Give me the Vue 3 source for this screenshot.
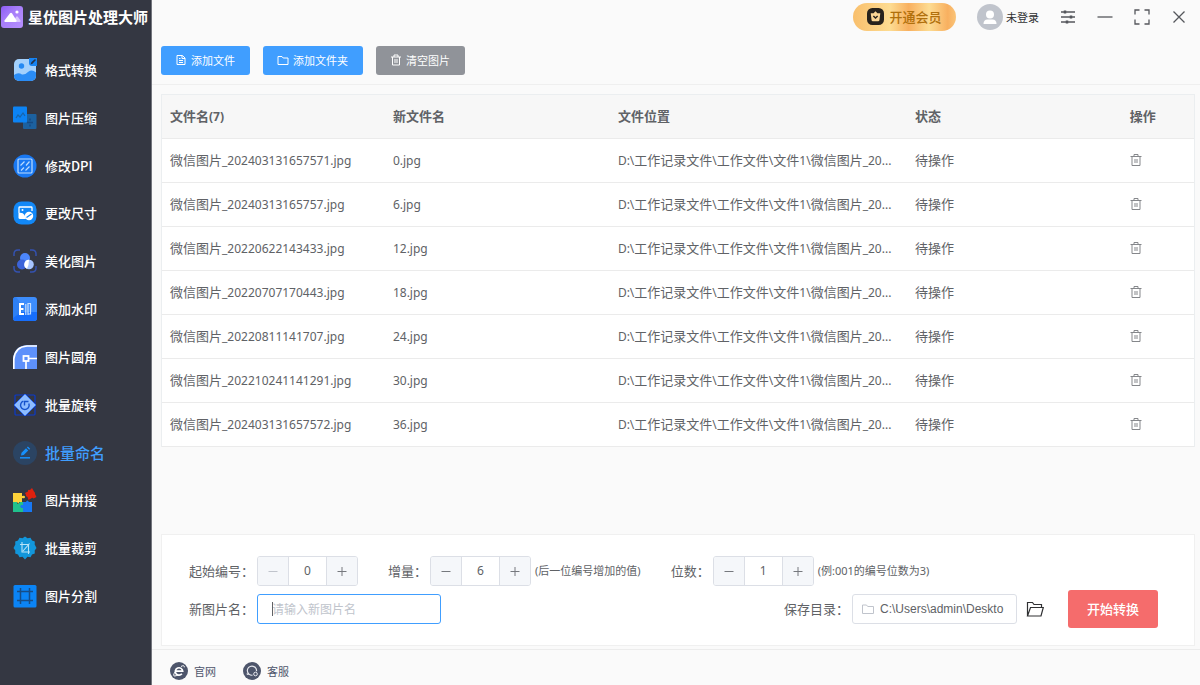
<script setup>
import { ref } from 'vue'

const navItems = [
  { id: 'convert', label: '格式转换' },
  { id: 'compress', label: '图片压缩' },
  { id: 'dpi', label: '修改DPI' },
  { id: 'resize', label: '更改尺寸' },
  { id: 'beautify', label: '美化图片' },
  { id: 'watermark', label: '添加水印' },
  { id: 'corner', label: '图片圆角' },
  { id: 'rotate', label: '批量旋转' },
  { id: 'rename', label: '批量命名' },
  { id: 'join', label: '图片拼接' },
  { id: 'crop', label: '批量裁剪' },
  { id: 'split', label: '图片分割' },
]
const active = ref('rename')

const folder = 'D:\\工作记录文件\\工作文件\\文件1\\'
const files = ref(
  [
    ['微信图片_202403131657571.jpg', '0.jpg'],
    ['微信图片_20240313165757.jpg', '6.jpg'],
    ['微信图片_20220622143433.jpg', '12.jpg'],
    ['微信图片_20220707170443.jpg', '18.jpg'],
    ['微信图片_20220811141707.jpg', '24.jpg'],
    ['微信图片_202210241141291.jpg', '30.jpg'],
    ['微信图片_202403131657572.jpg', '36.jpg'],
  ].map(([name, renamed]) => ({ name, renamed, path: folder + '微信图片_20...', status: '待操作' }))
)

const numbers = ref([
  { id: 'start', label: '起始编号：', value: 0, min: 0, hint: '' },
  { id: 'step', label: '增量：', value: 6, min: 1, hint: '(后一位编号增加的值)' },
  { id: 'digits', label: '位数：', value: 1, min: 0, hint: '(例:001的编号位数为3)' },
])
const newName = ref('')
const savePath = ref('C:\\Users\\admin\\Deskto')

// Splits mixed text so Latin runs can be set slightly smaller than Chinese ones.
function runs(text) {
  return text.match(/[\x20-\x7e]+|[^\x20-\x7e]+/g).map((t) => ({ t, latin: t.charCodeAt(0) < 127 }))
}
</script>

<template>
  <div class="app">
    <aside class="sidebar">
      <div class="brand">
        <svg class="brand-icon" viewBox="0 0 24 24" aria-hidden="true">
          <defs>
            <linearGradient id="brandFill" x1="0" y1="0" x2="1" y2="1">
              <stop offset="0" stop-color="#8d5cf6" /><stop offset=".4" stop-color="#a67df9" /><stop offset="1" stop-color="#b690ff" />
            </linearGradient>
          </defs>
          <rect x="1" y="1" width="22" height="22" rx="3" fill="url(#brandFill)" />
          <path d="M13 17l3-5q1-1.500 2 0l2.500 3.500q.6 1.500-1 1.500z" fill="#d9c6ff" />
          <path d="M5 17q-1-.2-.5-1.400L10 8.300q1-1.200 2 0l4.500 7.300q.5 1.200-1 1.400z" fill="#fff" />
          <circle cx="17" cy="7" r="1.600" fill="#fff" />
        </svg>
        <h1>星优图片处理大师</h1>
      </div>
      <nav class="nav">
        <a v-for="n in navItems" :key="n.id" href="#" :class="{ active: n.id === active }" @click.prevent="active = n.id">
          <svg class="nav-icon" viewBox="0 0 24 24" aria-hidden="true">
            <g v-if="n.id === 'convert'">
              <rect x="1" y="1" width="22" height="22" rx="5" fill="#a3d0fc" />
              <path d="M1 17q4-3 8-.5 3 .5 6-2.500 4-3 8 .5V18a5 5 0 0 1-5 5H6a5 5 0 0 1-5-5z" fill="#2a8cf5" />
              <circle cx="8.500" cy="8" r="2.700" fill="#2489f3" />
              <path d="M16 0h8v8h-5q-3 0-3-3z" fill="#1683f2" />
              <path d="M17.500 6.500l1-2.500L22 1l1 1-3.500 3.800z" fill="#253349" />
            </g>
            <g v-else-if="n.id === 'compress'">
              <rect x="10" y="8" width="13.500" height="15" rx="1" fill="#1c619f" />
              <path d="M14 16.500h6M17 12.500v2M17 18.500v2" stroke="#164a82" stroke-width="1.500" />
              <rect x="0" y="0.500" width="14" height="16" rx="1" fill="#0c83f4" />
              <path d="M3 12l2-3 2 2 3-4 2 3" stroke="#1864a9" stroke-width="1.200" fill="none" />
            </g>
            <g v-else-if="n.id === 'dpi'" fill="none" stroke="#bbdcff" stroke-width="1.200">
              <circle cx="12" cy="12" r="11.500" fill="#1978f2" stroke="none" />
              <rect x="5" y="5" width="14" height="14" rx="1" />
              <path d="M7.500 11.500l4-4M8 16.500l3-3M13 11.500l3.500-4M12.500 16.500l4-4" />
            </g>
            <g v-else-if="n.id === 'resize'">
              <rect x=".5" y=".5" width="23" height="23" rx="8" fill="#1288f7" />
              <path d="M6 12V6.800q0-.8.800-.8h11.400q.8 0 .8.800V10" fill="none" stroke="#fff" stroke-width="1.300" />
              <circle cx="9.500" cy="9" r="1" fill="#fff" />
              <path d="M5.500 12q4-1 6 2l1.500 4H7q-1.500 0-1.500-1.500z" fill="#fff" />
              <circle cx="16" cy="15" r="4.200" fill="#fff" />
              <path d="M13.500 16.500l5-3.500" stroke="#1288f7" stroke-width="1.300" />
            </g>
            <g v-else-if="n.id === 'beautify'">
              <path d="M1 7V5q0-4 4-4h2M17 1h2q4 0 4 4v2M23 17v2q0 4-4 4h-2M7 23H5q-4 0-4-4v-2" fill="none" stroke="#3452b0" stroke-width="1.500" />
              <circle cx="12" cy="9" r="5" fill="#4c86fa" />
              <circle cx="9" cy="15.500" r="5" fill="#3b63d9" />
              <circle cx="16" cy="15.500" r="4.800" fill="#a8c5ff" />
              <path d="M16 10.700a4.800 4.800 0 0 0-2 9.100q2-4 2-9.100z" fill="#fff" />
            </g>
            <g v-else-if="n.id === 'watermark'">
              <rect width="24" height="24" rx="3" fill="#3d8dfc" />
              <path d="M0 3q0-3 3-3l9 12L0 21z" fill="#2e80f4" />
              <path d="M0 21l8-6h16v6q0 3-3 3H3q-3 0-3-3z" fill="#176efb" />
              <path d="M11 7H7v10h4M7 12h3.500" fill="none" stroke="#fff" stroke-width="2" />
              <path d="M12.800 18V7M15 18V6.500h2.500V17H15" fill="none" stroke="#c4deff" stroke-width="1.200" />
            </g>
            <g v-else-if="n.id === 'corner'">
              <path d="M0 24V14Q1 1 14 0h10v24z" fill="#5e91fb" />
              <path d="M.8 24V14Q2 2 14 1h10" fill="none" stroke="#fff" stroke-width="1.700" />
              <rect x="10.500" y="11" width="5" height="5" fill="none" stroke="#fff" stroke-width="1.800" />
              <path d="M16 13.500h8M13 16v8" stroke="#fff" stroke-width="1.700" />
            </g>
            <g v-else-if="n.id === 'rotate'">
              <rect x="2" y="2" width="20" height="20" rx="1" fill="none" stroke="#0a3acb" stroke-width="1.200" />
              <path d="M12 1L23 12 12 23 1 12z" fill="#8dbcff" stroke="#2f6cf2" stroke-width="1" stroke-linejoin="round" />
              <path d="M15.800 10.500a4.300 4.300 0 1 1-5.500-2.300M11.500 12.500V8.500h4" fill="none" stroke="#1552cc" stroke-width="1.400" />
            </g>
            <g v-else-if="n.id === 'rename'">
              <circle cx="12" cy="12" r="12" fill="#2b4463" />
              <path d="M8 14.500l.5-2.700 4.500-4.500 2.200 2.200-4.500 4.500zM13.900 6.500l1-1 2.300 2.200-1 1z" fill="#1690fc" />
              <path d="M7 16.800h10" stroke="#1690fc" stroke-width="1.500" />
            </g>
            <g v-else-if="n.id === 'join'">
              <path d="M0 5h9v3q3-1 3 1t-3 1v4H6q0 3-2 0H0z" fill="#fdd23a" />
              <path d="M0 14h4q0 4 3 0h3v3q-3 0-2 2l2 1v4H0z" fill="#20c18d" />
              <path d="M10 14h3q1-3 3 0h3v10h-9v-4q-4 0-2-3h2z" fill="#1878f4" />
              <path d="M12 5l3-1.500Q14.500 1 17 2l2-2 2 3.500q1.500 1 1 2.500l1.500 3-3 1.500q-1-1.500-2.500 0l-2.500 1.500-1-3q-2.500-1-1.500-2z" fill="#df210e" />
            </g>
            <g v-else-if="n.id === 'crop'">
              <path d="M12 .5l2.500 1.700 3-.4 1.500 2.700 2.800 1-.1 3L23.500 12l-1.800 2.500.1 3-2.800 1-1.500 2.700-3-.4L12 23.500l-2.500-2.700-3 .4L5 18.500l-2.800-1 .1-3L.5 12l1.800-3.500-.1-3 2.800-1 1.500-2.700 3 .4z" fill="#1296db" />
              <path d="M9 6v10h8M7 8.500h8.500V18M10 15l6.500-7.500" fill="none" stroke="#b7e3f7" stroke-width="1.100" />
            </g>
            <g v-else>
              <rect x=".5" y="1" width="23" height="22.500" rx="1.500" fill="#0b84f5" />
              <path d="M7.500 4v16M16.500 4v16M4 7.500h16M4 16.500h16" stroke="#174d86" stroke-width="1.500" />
            </g>
          </svg>
          <span>{{ n.label }}</span>
        </a>
      </nav>
    </aside>

    <main class="main">
      <header class="head">
        <div class="titlebar">
          <button class="vip" type="button">
            <svg viewBox="0 0 16 16" aria-hidden="true">
              <rect width="16" height="16" rx="5" fill="#28231c" />
              <path d="M8 3l1.800 2L12.500 5l-.8 6.500q-.2 1-1.200 1h-5q-1 0-1.200-1L3.500 5l2.700 0z" fill="#fcd795" />
              <path d="M6 7.500l2 2 2-2" fill="none" stroke="#28231c" stroke-width="1.300" />
            </svg>
            开通会员
          </button>
          <button class="user" type="button">
            <svg viewBox="0 0 26 26" aria-hidden="true">
              <circle cx="13" cy="13" r="13" fill="#c0c4cc" />
              <circle cx="13" cy="10.500" r="4" fill="#fff" />
              <path d="M6.500 20q0-4.500 4-4.500h5q4 0 4 4.500z" fill="#fff" />
            </svg>
            未登录
          </button>
          <button class="win" type="button" aria-label="设置">
            <svg viewBox="0 0 16 16"><path d="M1 3h14M1 8h14M1 13h14" /><path d="M5 1.500v3M11 6.500v3M7 11.500v3" stroke-width="2.500" /></svg>
          </button>
          <button class="win" type="button" aria-label="最小化">
            <svg viewBox="0 0 16 16"><path d="M0.500 8h15" /></svg>
          </button>
          <button class="win" type="button" aria-label="最大化">
            <svg viewBox="0 0 16 16"><path d="M1 5.500V1h4.500M10.500 1H15v4.500M15 10.500V15h-4.500M5.500 15H1v-4.500" /></svg>
          </button>
          <button class="win" type="button" aria-label="关闭">
            <svg viewBox="0 0 16 16"><path d="M2.500 2.500l11 11M13.500 2.500l-11 11" /></svg>
          </button>
        </div>
        <div class="toolbar">
          <button class="btn" type="button">
            <svg viewBox="0 0 12 12"><path d="M2 1.500h5.500l2.500 2.500v6.500H2zM7 1.500v3h3M4 6.500h4M4 8.500h4M4 4.500h1.500" /></svg>添加文件
          </button>
          <button class="btn" type="button">
            <svg viewBox="0 0 12 12"><path d="M1 2.500h4l1.200 1.500h4.800V10.500H1z" /></svg>添加文件夹
          </button>
          <button class="btn grey" type="button">
            <svg viewBox="0 0 12 12"><path d="M1 3h10M4 3V1h4v2M2.500 3v8h7V3M5 5v4M7 5v4" /></svg>清空图片
          </button>
        </div>
      </header>

      <section class="content">
        <table class="files">
          <colgroup><col class="c1" /><col class="c2" /><col class="c3" /><col class="c4" /><col /></colgroup>
          <thead>
            <tr>
              <th>文件名<span class="latin">({{ files.length }})</span></th>
              <th>新文件名</th><th>文件位置</th><th>状态</th><th>操作</th>
            </tr>
          </thead>
          <tbody>
            <tr v-for="(f, i) in files" :key="i">
              <td><span v-for="(r, k) in runs(f.name)" :key="k" :class="{ latin: r.latin }">{{ r.t }}</span></td>
              <td><span class="latin">{{ f.renamed }}</span></td>
              <td><span v-for="(r, k) in runs(f.path)" :key="k" :class="{ latin: r.latin }">{{ r.t }}</span></td>
              <td>{{ f.status }}</td>
              <td>
                <button class="trash" type="button" aria-label="删除">
                  <svg viewBox="0 0 12 12"><path d="M.5 2.500h11M4 2.500V.5h4v2M2 2.500v9h8v-9M5 5v4M7 5v4" /></svg>
                </button>
              </td>
            </tr>
          </tbody>
        </table>

        <form class="panel" @submit.prevent>
          <div class="row">
            <div v-for="n in numbers" :key="n.id" class="field">
              <label :for="n.id">{{ n.label }}</label>
              <div class="stepper">
                <button type="button" aria-label="减少" :disabled="n.value <= n.min && n.id === 'start'" @click="n.value--">
                  <svg viewBox="0 0 12 12"><path d="M1.500 6.500h9" /></svg>
                </button>
                <input :id="n.id" v-model.number="n.value" type="text" inputmode="numeric" />
                <button type="button" aria-label="增加" @click="n.value++">
                  <svg viewBox="0 0 12 12"><path d="M1.500 6.500h9M6 2v9" /></svg>
                </button>
              </div>
              <span v-if="n.hint" class="hint">{{ n.hint }}</span>
            </div>
          </div>
          <div class="row">
            <div class="field">
              <label for="newname">新图片名：</label>
              <div class="name-box">
                <input id="newname" v-model="newName" type="text" placeholder="请输入新图片名" />
              </div>
            </div>
            <div class="field save">
              <label for="savepath">保存目录：</label>
              <div class="path-box">
                <svg viewBox="0 0 12 12" aria-hidden="true"><path d="M.5 2h4l1.200 1.500h5.800V10.500H.5z" /></svg>
                <input id="savepath" v-model="savePath" type="text" />
              </div>
              <button class="open" type="button" aria-label="打开目录">
                <svg viewBox="0 0 18 18"><path d="M1.500 16V2.500h5l1.500 2h7.500v3M1.500 16L4.500 7.500H17.300L15 16z" /></svg>
              </button>
            </div>
            <button class="start" type="submit">开始转换</button>
          </div>
        </form>
      </section>

      <footer class="foot">
        <a href="#">
          <svg viewBox="0 0 18 18" aria-hidden="true">
            <circle cx="9" cy="9" r="9" fill="#4d556b" />
            <path d="M5.500 9.200h7.200a3.700 3.700 0 1 0-.8 2.600" fill="none" stroke="#fff" stroke-width="1.700" />
            <path d="M11 4.500q3.500-2 3.300.8M5 10q-2.500 4-.3 4 1.500 0 3.300-1.200" fill="none" stroke="#fff" stroke-width="1" />
          </svg>官网
        </a>
        <a href="#">
          <svg viewBox="0 0 18 18" aria-hidden="true">
            <circle cx="9" cy="9" r="9" fill="#4d556b" />
            <path d="M9.500 13.200a4.600 4.600 0 1 1 4-4M5.500 12.500q-1.500 0-1.500-1" fill="none" stroke="#e7e9ef" stroke-width="1.200" />
            <circle cx="12.500" cy="12" r="1.800" fill="none" stroke="#e7e9ef" />
          </svg>客服
        </a>
      </footer>
    </main>
  </div>
</template>

<style>
body {
  margin: 0;
  background: #fafafa;
}
</style>

<style scoped>
.app {
  display: flex;
  min-height: 100vh;
  font: 13px/20px 'Noto Sans CJK SC', sans-serif;
  color: #606266;
}
.app * {
  box-sizing: border-box;
}
button,
input {
  font: inherit;
  color: inherit;
  padding: 0;
  margin: 0;
  border: 0;
  background: none;
  outline: 0;
  min-width: 0;
}
svg {
  display: block;
  flex: none;
}
.latin {
  font-family: 'Noto Sans', sans-serif;
  font-size: 12px;
  line-height: 12px;
}
.sidebar {
  flex: none;
  width: 152px;
  display: flex;
  flex-direction: column;
  padding-bottom: 65px;
  background: #343742;
  border-right: 1px solid #73757d;
  color: #fff;
}
.brand {
  display: flex;
  align-items: center;
  gap: 4px;
  height: 34px;
  margin-bottom: 12px;
}
.brand-icon {
  width: 24px;
  height: 24px;
}
.brand h1 {
  margin: 0;
  font-size: 15px;
  font-weight: 700;
  white-space: nowrap;
}
.nav {
  flex: 1;
  display: grid;
  grid-auto-rows: 1fr;
}
.nav a {
  display: flex;
  align-items: center;
  gap: 8px;
  padding-left: 13px;
  color: #fff;
  font-weight: 500;
  text-decoration: none;
}
.nav a.active {
  color: #409eff;
  font-size: 15px;
}
.nav-icon {
  width: 24px;
  height: 24px;
}
.main {
  flex: 1;
  min-width: 0;
  display: flex;
  flex-direction: column;
}
.head {
  padding-bottom: 9px;
  border-bottom: 1px solid #efefef;
}
.titlebar {
  display: flex;
  align-items: center;
  justify-content: flex-end;
  gap: 21px;
  height: 34px;
  padding-right: 13px;
}
.vip {
  display: flex;
  align-items: center;
  justify-content: center;
  gap: 5px;
  width: 103px;
  height: 28px;
  padding-bottom: 1px;
  border-radius: 14px;
  background: linear-gradient(90deg, #f9bf6c, #fddc92 36%, #f8b060 54%, #fddc92 74%, #f8b060 92%, #fac478);
  color: #b0700c;
  font-weight: 500;
}
.vip svg {
  width: 17px;
  height: 17px;
}
.user {
  display: flex;
  align-items: center;
  gap: 3px;
  font-size: 11px;
  color: #303133;
}
.user svg {
  width: 26px;
  height: 26px;
}
.win svg {
  width: 16px;
  height: 16px;
  fill: none;
  stroke: #55575c;
  stroke-width: 1.300;
}
.toolbar {
  display: flex;
  gap: 13px;
  padding: 12px 9px 0;
}
.btn {
  display: flex;
  align-items: center;
  gap: 4px;
  height: 29px;
  padding: 0 15px 2px 14px;
  border-radius: 3px;
  background: #409eff;
  color: #fff;
  font-size: 11px;
}
.btn.grey {
  background: #909399;
}
.btn svg {
  width: 12px;
  height: 12px;
  fill: none;
  stroke: #fff;
}
.content {
  flex: 1;
  display: flex;
  flex-direction: column;
  padding: 9px 5px 3px 9px;
}
.files {
  width: 100%;
  table-layout: fixed;
  border-collapse: separate;
  border-spacing: 0;
  background: #fff;
  border: 1px solid #ebeef0;
  border-bottom: 0;
  margin-bottom: 20px;
}
.c1 {
  width: 21.6%;
}
.c2 {
  width: 21.8%;
}
.c3 {
  width: 28.8%;
}
.c4 {
  width: 20.8%;
}
.files th,
.files td {
  height: 44px;
  padding: 0 8px 2px;
  border-bottom: 1px solid #ebebeb;
  text-align: left;
  white-space: nowrap;
  overflow: hidden;
}
.files th {
  background: #f7f7f7;
  font-weight: 700;
}
.trash {
  display: block;
}
.trash svg {
  width: 12px;
  height: 12px;
  fill: none;
  stroke: #85878b;
}
.panel {
  display: flex;
  flex-direction: column;
  gap: 4px;
  margin-top: auto;
  padding: 21px 36px 17px 27px;
  background: #fff;
  border: 1px solid #f0f0f0;
}
.row {
  display: flex;
  align-items: center;
  gap: 30px;
}
.field {
  display: flex;
  align-items: center;
}
.field label {
  padding-right: 3px;
  white-space: nowrap;
}
.hint {
  padding-left: 4px;
  font-family: 'Noto Sans', 'Noto Sans CJK SC', sans-serif;
  font-size: 11px;
  white-space: nowrap;
}
.stepper {
  display: flex;
  width: 101px;
  height: 30px;
  border: 1px solid #dcdfe6;
  border-radius: 3px;
  overflow: hidden;
}
.stepper input {
  flex: 1;
  width: 0;
  text-align: center;
  font-family: 'Noto Sans', sans-serif;
  font-size: 12px;
  border: 1px solid #dcdfe6;
  border-width: 0 1px;
}
.stepper button {
  display: flex;
  align-items: center;
  justify-content: center;
  width: 30px;
  background: #f5f7fa;
}
.stepper svg {
  width: 12px;
  height: 12px;
  fill: none;
  stroke: #76797e;
}
.stepper button:disabled svg {
  stroke: #c0c4cc;
}
.name-box {
  position: relative;
}
.name-box::before {
  content: '';
  position: absolute;
  left: 15px;
  top: 8px;
  width: 1px;
  height: 14px;
  background: #606266;
}
.name-box input {
  width: 184px;
  height: 30px;
  padding: 0 14px 2px;
  border: 1px solid #409eff;
  border-radius: 3px;
  font-size: 12px;
  caret-color: transparent;
}
.name-box input::placeholder {
  color: #c0c4cc;
  opacity: 1;
}
.save {
  margin-left: auto;
}
.path-box {
  display: flex;
  align-items: center;
  gap: 6px;
  width: 165px;
  height: 30px;
  padding: 0 8px 0 9px;
  border: 1px solid #dcdfe6;
  border-radius: 3px;
}
.path-box svg {
  width: 12px;
  height: 12px;
  fill: none;
  stroke: #c0c4cc;
}
.path-box input {
  flex: 1;
  width: 0;
  font-family: 'Liberation Sans', sans-serif;
  font-size: 12px;
}
.open {
  margin-left: 9px;
}
.open svg {
  width: 18px;
  height: 18px;
  fill: none;
  stroke: #303133;
  stroke-width: 1.200;
}
.start {
  width: 90px;
  height: 38px;
  margin-left: -6px;
  padding-bottom: 1px;
  border-radius: 3px;
  background: #f56c6c;
  color: #fff;
  font-weight: 500;
}
.foot {
  display: flex;
  align-items: center;
  gap: 27px;
  height: 36px;
  padding: 6px 18px 0;
  border-top: 1px solid #ececec;
}
.foot a {
  display: flex;
  align-items: center;
  gap: 6px;
  font-size: 11px;
  color: #4d556b;
  text-decoration: none;
}
.foot svg {
  width: 18px;
  height: 18px;
}
</style>
